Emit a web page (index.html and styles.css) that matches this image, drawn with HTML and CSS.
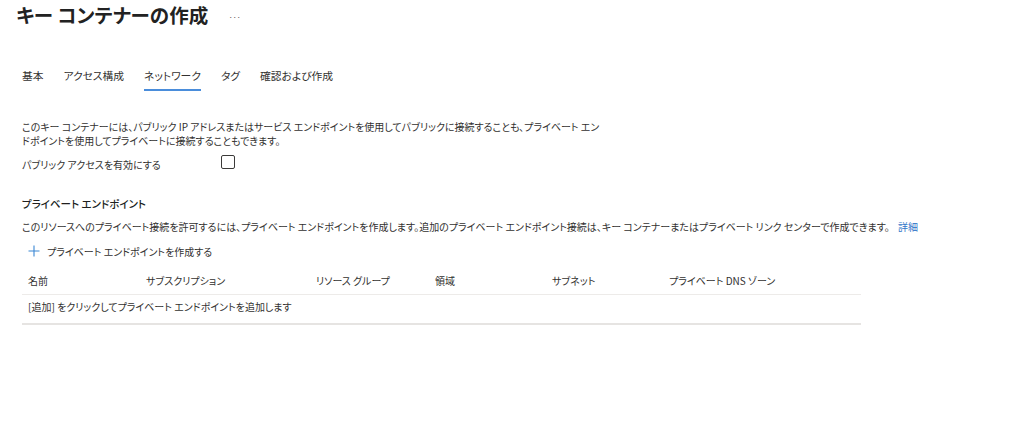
FILE: index.html
```html
<!DOCTYPE html>
<html lang="ja">
<head>
<meta charset="utf-8">
<link rel="stylesheet" href="styles.css">
</head>
<body>
<div class="page">
  <header class="title-bar">
    <h1 class="title">キー コンテナーの作成</h1>
    <span class="more">···</span>
  </header>
  <div class="content">
    <nav class="tabs">
      <span class="tab">基本</span>
      <span class="tab">アクセス構成</span>
      <span class="tab active">ネットワーク</span>
      <span class="tab">タグ</span>
      <span class="tab">確認および作成</span>
    </nav>
    <p class="intro">このキー コンテナーには、パブリック IP アドレスまたはサービス エンドポイントを使用してパブリックに接続することも、プライベート エンドポイントを使用してプライベートに接続することもできます。</p>
    <div class="field">
      <span class="field-label">パブリック アクセスを有効にする</span>
      <span class="checkbox"></span>
    </div>
    <h2 class="section-title">プライベート エンドポイント</h2>
    <p class="desc">このリソースへのプライベート接続を許可するには、プライベート エンドポイントを作成します。追加のプライベート エンドポイント接続は、キー コンテナーまたはプライベート リンク センターで作成できます。 <a class="link">詳細</a></p>
    <div class="add-btn">
      <svg class="plus" width="12" height="12" viewBox="0 0 12 12"><path d="M6 0.5V11.5M0.5 6H11.5" stroke="#3a87d4" stroke-width="1.1" fill="none"/></svg>
      <span>プライベート エンドポイントを作成する</span>
    </div>
    <div class="table">
      <div class="row head">
        <span class="c1">名前</span>
        <span class="c2">サブスクリプション</span>
        <span class="c3">リソース グループ</span>
        <span class="c4">領域</span>
        <span class="c5">サブネット</span>
        <span class="c6">プライベート DNS ゾーン</span>
      </div>
      <div class="row body">
        <span>[追加] をクリックしてプライベート エンドポイントを追加します</span>
      </div>
    </div>
  </div>
</div>
</body>
</html>
```
FILE: styles.css
```css
* { box-sizing: border-box; }
html, body { margin: 0; padding: 0; background: #fff; }
body {
  font-family: "Noto Sans CJK JP", "Noto Sans", sans-serif;
  font-feature-settings: "palt";
  color: #323130;
  font-size: 10px;
}
.page { padding: 3px 0 0 16px; }
.title-bar { display: flex; align-items: center; height: 24px; }
.title {
  margin: 0;
  font-size: 19.5px;
  font-weight: 700;
  line-height: 24px;
  letter-spacing: 0.1px;
  color: #222;
}
.more { margin-left: 20px; font-size: 8px; color: #555; letter-spacing: -0.5px; position: relative; top: 1px; }
.content { padding-left: 6px; }
.tabs { display: flex; gap: 20px; margin-top: 41px; height: 23px; }
.tab {
  font-size: 10.75px;
  line-height: 16px;
  height: 23px;
  border-bottom: 2px solid transparent;
  color: #323130;
}
.tab.active { border-bottom-color: #4a8ddb; }
.intro {
  margin: 29px 0 0 0;
  width: 580px;
  line-height: 14px;
}
.field { display: flex; align-items: center; margin-top: 8px; height: 16px; }
.field-label { width: 199px; }
.checkbox {
  width: 14px; height: 14px;
  border: 1px solid #3b3a39;
  border-radius: 2px;
  position: relative; top: -2px;
}
.section-title {
  margin: 24px 0 0 0;
  font-size: 10.5px;
  font-weight: 500;
  line-height: 16px;
  color: #201f1e;
}
.desc { margin: 8px 0 0 0; line-height: 14px; }
.link { color: #2f74c8; margin-left: 6px; }
.add-btn { display: flex; align-items: center; gap: 7px; margin-top: 10px; padding-left: 6px; height: 14px; }
.table { margin-top: 11px; width: 839px; border-bottom: 2px solid #e6e4e2; }
.row { display: flex; align-items: center; padding-left: 6px; }
.row.head { height: 26px; padding-bottom: 3px; border-bottom: 1px solid #edebe9; }
.row.body { height: 28px; padding-bottom: 6px; }
.c1 { width: 118px; }
.c2 { width: 170px; }
.c3 { width: 119px; }
.c4 { width: 117px; }
.c5 { width: 117px; }
```
